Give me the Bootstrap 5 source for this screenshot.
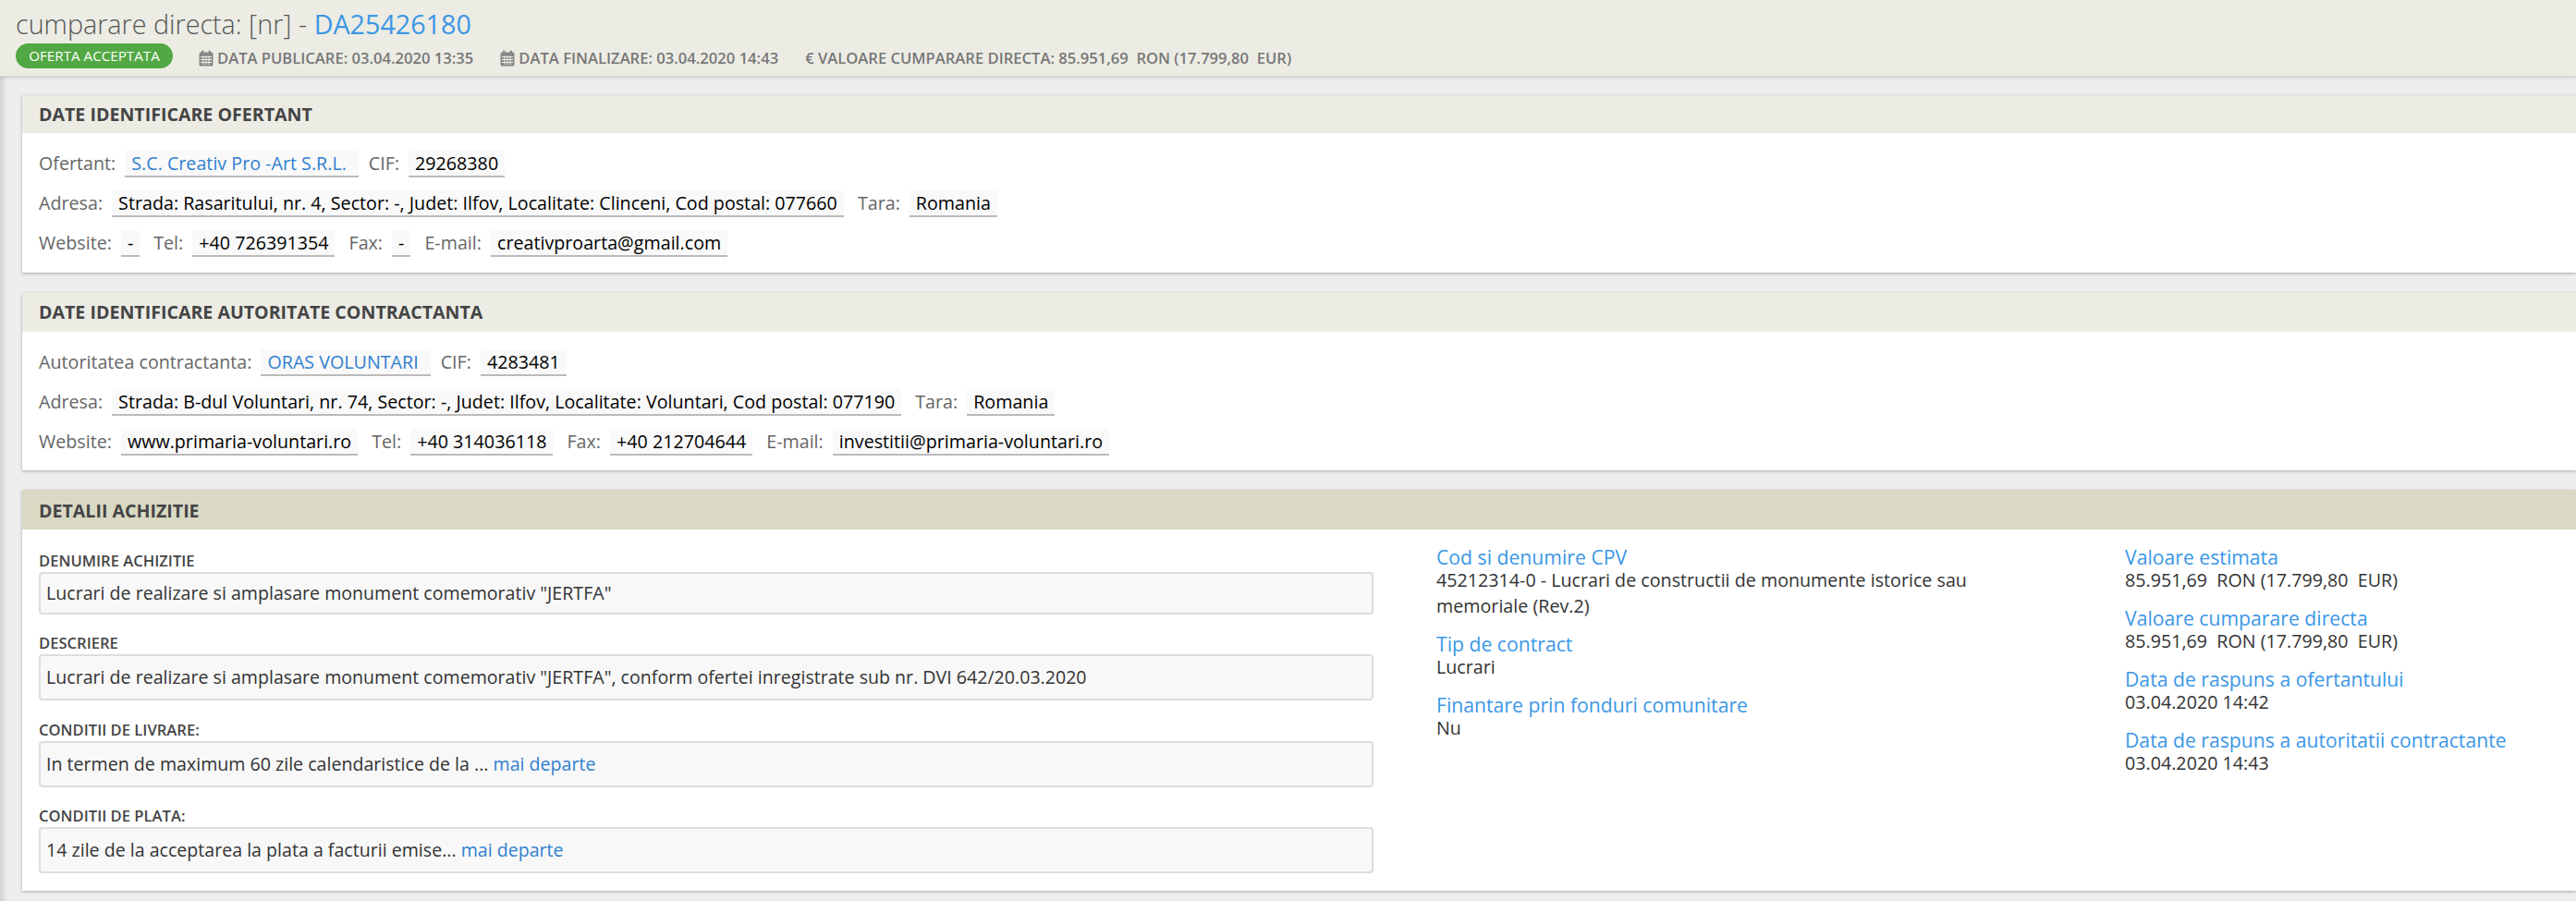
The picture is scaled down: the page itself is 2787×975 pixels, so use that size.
<!DOCTYPE html>
<html lang="ro">
<head>
  <meta charset="UTF-8">
  <title>Cumparare directa DA25426180</title>
  <link href="https://cdn.jsdelivr.net/npm/bootstrap@5.3.0/dist/css/bootstrap.min.css" rel="stylesheet">
  <style>
    body { font-family: "Open Sans", sans-serif; font-size: 19.7px; background: #eee; color: #333; overflow: hidden; box-shadow: inset 6px 0 6px -3px rgba(0,0,0,.14); min-height: 975px; }
    a { color: #2f80cf; text-decoration: none; }

    /* page head */
    .page-head { height: 83px; background: #ecece4; border-bottom: 1px solid #d5d5d0; box-shadow: 0 1px 4px rgba(0,0,0,.15); padding: 8px 0 0 17px; }
    .page-title { font-size: 28.7px; font-weight: 300; line-height: 36px; color: #555; margin: 0; }
    .page-title a { color: #3c97e6; font-weight: 400; }
    .status-pill { width: 170px; height: 27px; background: #52a843; font-size: 15.2px; font-weight: 400; line-height: 27px; padding: 0; }
    .meta-line { margin-top: 2px; }
    .meta-item { font-size: 16.6px; font-weight: 600; color: #777; text-transform: uppercase; white-space: pre; padding-top: 5px; margin-right: 29px; }
    .cal-ico { width: 16px; height: 18px; margin-right: 4px; }

    /* panels */
    .panel-box { border: 0; border-radius: 0; margin: 20px 0 0 24px; box-shadow: 0 1px 3px rgba(0,0,0,.3); }
    .panel-box + .panel-box { margin-top: 22px; }
    .panel-box .card-header { height: 41px; padding: 0 18px; background: #ecece4; border: 0; border-radius: 0; font-size: 19.6px; font-weight: 700; line-height: 41px; color: #444; }
    .panel-box.second .card-header { height: 42px; line-height: 42px; }
    .panel-box.second .card-body { padding-bottom: 16px; }
    .panel-box.olive { margin-top: 21px; }
    .panel-box.olive .card-header { height: 43px; line-height: 45px; background: #d9d9c4; }
    .panel-box .card-body { padding: 19px 18px 17px; }
    .panel-box.olive .card-body { padding-bottom: 19px; }
    .info-row { height: 29px; margin-bottom: 14px; line-height: 27px; color: #666; }
    .info-row:last-child { margin-bottom: 0; }
    .chip { background: #f9f9f9; border-bottom: 2px solid #bbb; padding: 0 7px; margin: 0 15px 0 10px; color: #000; white-space: pre; height: 29px; }
    .info-row:first-child .chip { margin-right: 11px; }
    .chip a { color: #2f80cf; padding-right: 6px; }

    /* detalii */
    .detail-grid { display: grid; grid-template-columns: 1444px 677px 1fr; column-gap: 68px; }
    .detail-left { margin-top: 5px; }
    .field-label { font-size: 16.6px; font-weight: 600; color: #444; line-height: 20px; margin-bottom: 2px; text-transform: uppercase; }
    .field-box { height: 50px; line-height: 46px; padding: 0 6px; font-size: 19.6px; background: #f8f8f8; border: 2px solid #ddd; border-radius: 4px; margin-bottom: 21.4px; color: #333; }
    .field-box:last-child { margin-bottom: 0; }
    .field-box.short { height: 46px; line-height: 42px; }
    .info-head { font-size: 21.2px; line-height: 22px; color: #3c97e6; }
    .info-val { line-height: 28px; color: #333; margin-bottom: 16px; }
  </style>
</head>
<body>

<!-- Antet -->
<div class="page-head">
  <h1 class="page-title">cumparare directa: [nr] - <a href="#">DA25426180</a></h1>
  <div class="d-flex align-items-center meta-line">
    <span class="badge rounded-pill status-pill me-4">OFERTA ACCEPTATA</span>
    <span class="meta-item d-flex align-items-center ms-1">
      <svg class="cal-ico" viewBox="0 0 16 18"><rect x="0.5" y="2.5" width="15" height="15" rx="1.5" fill="#888"/><rect x="3" y="0.5" width="2.4" height="4" rx="1" fill="#888"/><rect x="10.6" y="0.5" width="2.4" height="4" rx="1" fill="#888"/><path d="M2 7.5h12M2 10.500h12M2 13.500h12M5 6.500v9.500M8 6.500v9.500M11 6.500v9.500" stroke="#ecece4" stroke-width="1"/></svg>Data publicare: 03.04.2020 13:35</span>
    <span class="meta-item d-flex align-items-center">
      <svg class="cal-ico" viewBox="0 0 16 18"><rect x="0.5" y="2.5" width="15" height="15" rx="1.5" fill="#888"/><rect x="3" y="0.5" width="2.4" height="4" rx="1" fill="#888"/><rect x="10.6" y="0.5" width="2.4" height="4" rx="1" fill="#888"/><path d="M2 7.5h12M2 10.500h12M2 13.500h12M5 6.500v9.500M8 6.500v9.500M11 6.500v9.500" stroke="#ecece4" stroke-width="1"/></svg>Data finalizare: 03.04.2020 14:43</span>
    <span class="meta-item">€ Valoare cumparare directa: 85.951,69  RON (17.799,80  EUR)</span>
  </div>
</div>

<!-- Ofertant -->
<div class="card panel-box">
  <div class="card-header">DATE IDENTIFICARE OFERTANT</div>
  <div class="card-body">
    <div class="info-row d-flex">Ofertant:<span class="chip"><a href="#">S.C. Creativ Pro -Art S.R.L.</a></span>CIF:<span class="chip">29268380</span></div>
    <div class="info-row d-flex">Adresa:<span class="chip">Strada: Rasaritului, nr. 4, Sector: -, Judet: Ilfov, Localitate: Clinceni, Cod postal: 077660</span>Tara:<span class="chip">Romania</span></div>
    <div class="info-row d-flex">Website:<span class="chip">-</span>Tel:<span class="chip">+40 726391354</span>Fax:<span class="chip">-</span>E-mail:<span class="chip">creativproarta@gmail.com</span></div>
  </div>
</div>

<!-- Autoritate -->
<div class="card panel-box second">
  <div class="card-header">DATE IDENTIFICARE AUTORITATE CONTRACTANTA</div>
  <div class="card-body">
    <div class="info-row d-flex">Autoritatea contractanta:<span class="chip"><a href="#">ORAS VOLUNTARI</a></span>CIF:<span class="chip">4283481</span></div>
    <div class="info-row d-flex">Adresa:<span class="chip">Strada: B-dul Voluntari, nr. 74, Sector: -, Judet: Ilfov, Localitate: Voluntari, Cod postal: 077190</span>Tara:<span class="chip">Romania</span></div>
    <div class="info-row d-flex">Website:<span class="chip">www.primaria-voluntari.ro</span>Tel:<span class="chip">+40 314036118</span>Fax:<span class="chip">+40 212704644</span>E-mail:<span class="chip">investitii@primaria-voluntari.ro</span></div>
  </div>
</div>

<!-- Detalii -->
<div class="card panel-box olive">
  <div class="card-header">DETALII ACHIZITIE</div>
  <div class="card-body">
    <div class="detail-grid">
      <div class="detail-left">
        <div class="field-label">Denumire achizitie</div>
        <div class="field-box short">Lucrari de realizare si amplasare monument comemorativ "JERTFA"</div>
        <div class="field-label">Descriere</div>
        <div class="field-box">Lucrari de realizare si amplasare monument comemorativ "JERTFA", conform ofertei inregistrate sub nr. DVI 642/20.03.2020</div>
        <div class="field-label">Conditii de livrare:</div>
        <div class="field-box">In termen de maximum 60 zile calendaristice de la ... <a href="#">mai departe</a></div>
        <div class="field-label">Conditii de plata:</div>
        <div class="field-box">14 zile de la acceptarea la plata a facturii emise... <a href="#">mai departe</a></div>
      </div>
      <div>
        <div class="info-head">Cod si denumire CPV</div>
        <div class="info-val">45212314-0 - Lucrari de constructii de monumente istorice sau<br>memoriale (Rev.2)</div>
        <div class="info-head">Tip de contract</div>
        <div class="info-val">Lucrari</div>
        <div class="info-head">Finantare prin fonduri comunitare</div>
        <div class="info-val">Nu</div>
      </div>
      <div>
        <div class="info-head">Valoare estimata</div>
        <div class="info-val">85.951,69&nbsp; RON (17.799,80&nbsp; EUR)</div>
        <div class="info-head">Valoare cumparare directa</div>
        <div class="info-val">85.951,69&nbsp; RON (17.799,80&nbsp; EUR)</div>
        <div class="info-head">Data de raspuns a ofertantului</div>
        <div class="info-val">03.04.2020 14:42</div>
        <div class="info-head">Data de raspuns a autoritatii contractante</div>
        <div class="info-val">03.04.2020 14:43</div>
      </div>
    </div>
  </div>
</div>

<script src="https://cdn.jsdelivr.net/npm/bootstrap@5.3.0/dist/js/bootstrap.bundle.min.js"></script>
</body>
</html>
